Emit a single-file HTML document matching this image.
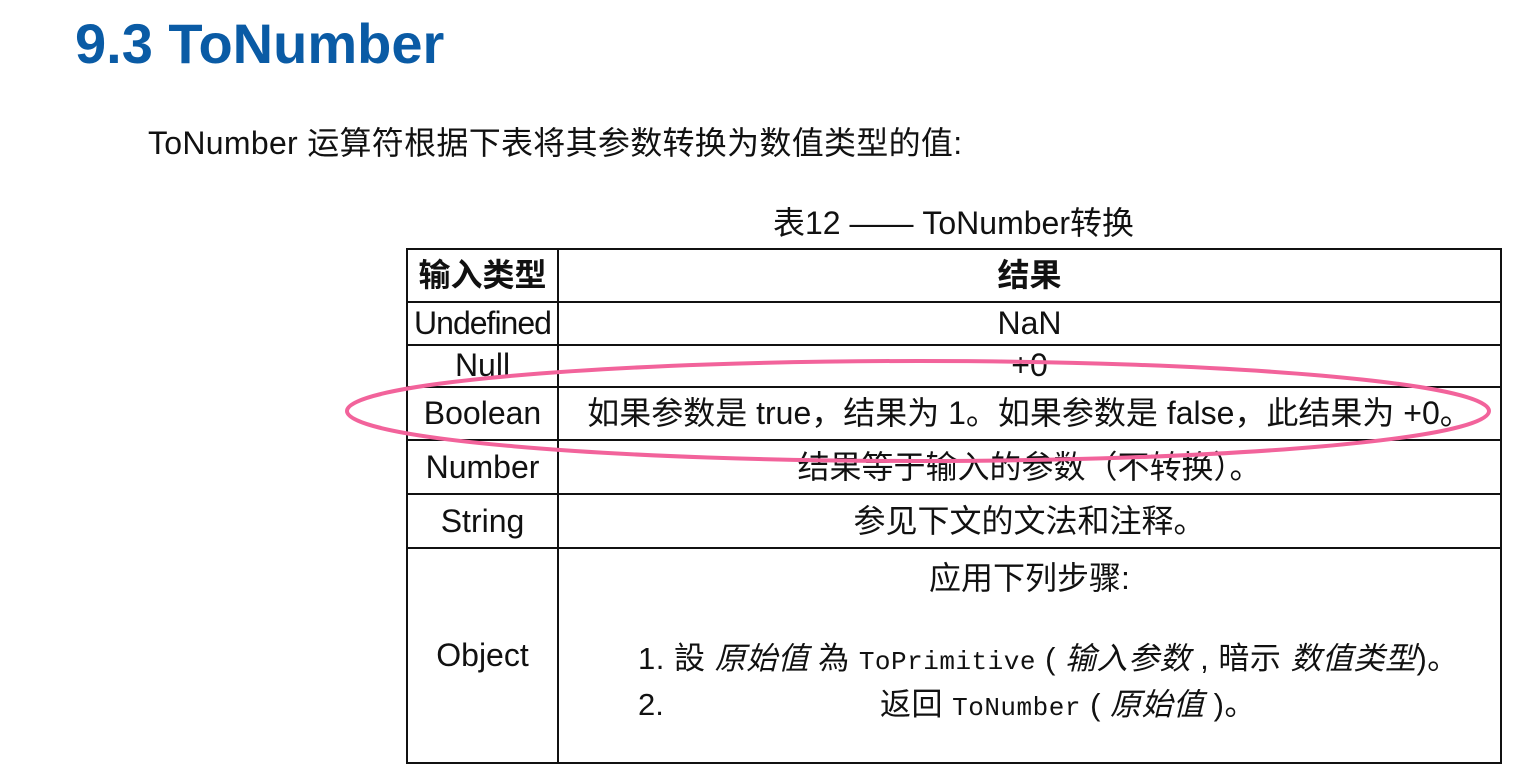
<!DOCTYPE html>
<html><head><meta charset="utf-8"><style>
body{margin:0;width:1528px;height:780px;background:#fff;position:relative;overflow:hidden;font-family:"Liberation Sans","Noto Sans CJK SC",sans-serif;color:#111}
.t{position:absolute;white-space:nowrap;line-height:1}
.h{position:absolute;background:#111;height:2px}
.v{position:absolute;background:#111;width:2px}
.c{position:absolute;text-align:center;font-size:32px;line-height:1;white-space:nowrap}
.m{font-family:"Liberation Mono",monospace;font-size:26px}
i{font-style:italic}
</style></head><body>
<div class="t" style="left:75px;top:16px;font-size:56px;font-weight:bold;color:#0a5ba5">9.3 ToNumber</div>
<div class="t" style="left:148px;top:127px;font-size:32px;letter-spacing:0.3px">ToNumber 运算符根据下表将其参数转换为数值类型的值:</div>
<div class="t" style="left:773px;top:207px;font-size:32px">表12 —— ToNumber转换</div>
<div class="h" style="left:406px;top:248px;width:1096px"></div>
<div class="h" style="left:406px;top:301px;width:1096px"></div>
<div class="h" style="left:406px;top:344px;width:1096px"></div>
<div class="h" style="left:406px;top:386px;width:1096px"></div>
<div class="h" style="left:406px;top:439px;width:1096px"></div>
<div class="h" style="left:406px;top:493px;width:1096px"></div>
<div class="h" style="left:406px;top:547px;width:1096px"></div>
<div class="h" style="left:406px;top:762px;width:1096px"></div>
<div class="v" style="left:406px;top:248px;height:516px"></div>
<div class="v" style="left:557px;top:248px;height:516px"></div>
<div class="v" style="left:1500px;top:248px;height:516px"></div>
<div class="c" style="left:408px;width:149px;top:259px;font-weight:bold">输入类型</div>
<div class="c" style="left:559px;width:941px;top:259px;font-weight:bold">结果</div>
<div class="c" style="left:408px;width:149px;top:307px;letter-spacing:-1px">Undefined</div>
<div class="c" style="left:559px;width:941px;top:307px">NaN</div>
<div class="c" style="left:408px;width:149px;top:349px">Null</div>
<div class="c" style="left:559px;width:941px;top:349px">+0</div>
<div class="c" style="left:408px;width:149px;top:397px">Boolean</div>
<div class="c" style="left:559px;width:941px;top:397px">如果参数是 true，结果为 1。如果参数是 false，此结果为 +0。</div>
<div class="c" style="left:408px;width:149px;top:451px">Number</div>
<div class="c" style="left:559px;width:941px;top:451px">结果等于输入的参数（不转换）。</div>
<div class="c" style="left:408px;width:149px;top:505px">String</div>
<div class="c" style="left:559px;width:941px;top:505px">参见下文的文法和注释。</div>
<div class="c" style="left:408px;width:149px;top:639px">Object</div>
<div class="c" style="left:559px;width:941px;top:562px">应用下列步骤:</div>
<div class="t" style="left:638px;top:643px;font-size:31px;letter-spacing:0.5px">1. 設 <i>原始值</i> 為 <span class="m">ToPrimitive</span> ( <i>输入参数</i> , 暗示 <i>数值类型</i>)。</div>
<div class="t" style="left:638px;top:689px;font-size:31px">2.</div>
<div class="t" style="left:880px;top:689px;font-size:31px;letter-spacing:0.5px">返回 <span class="m">ToNumber</span> ( <i>原始值</i> )。</div>
<svg style="position:absolute;left:0;top:0" width="1528" height="780"><ellipse cx="918" cy="411" rx="571" ry="50" fill="none" stroke="#f2639b" stroke-width="4"/></svg>
</body></html>
